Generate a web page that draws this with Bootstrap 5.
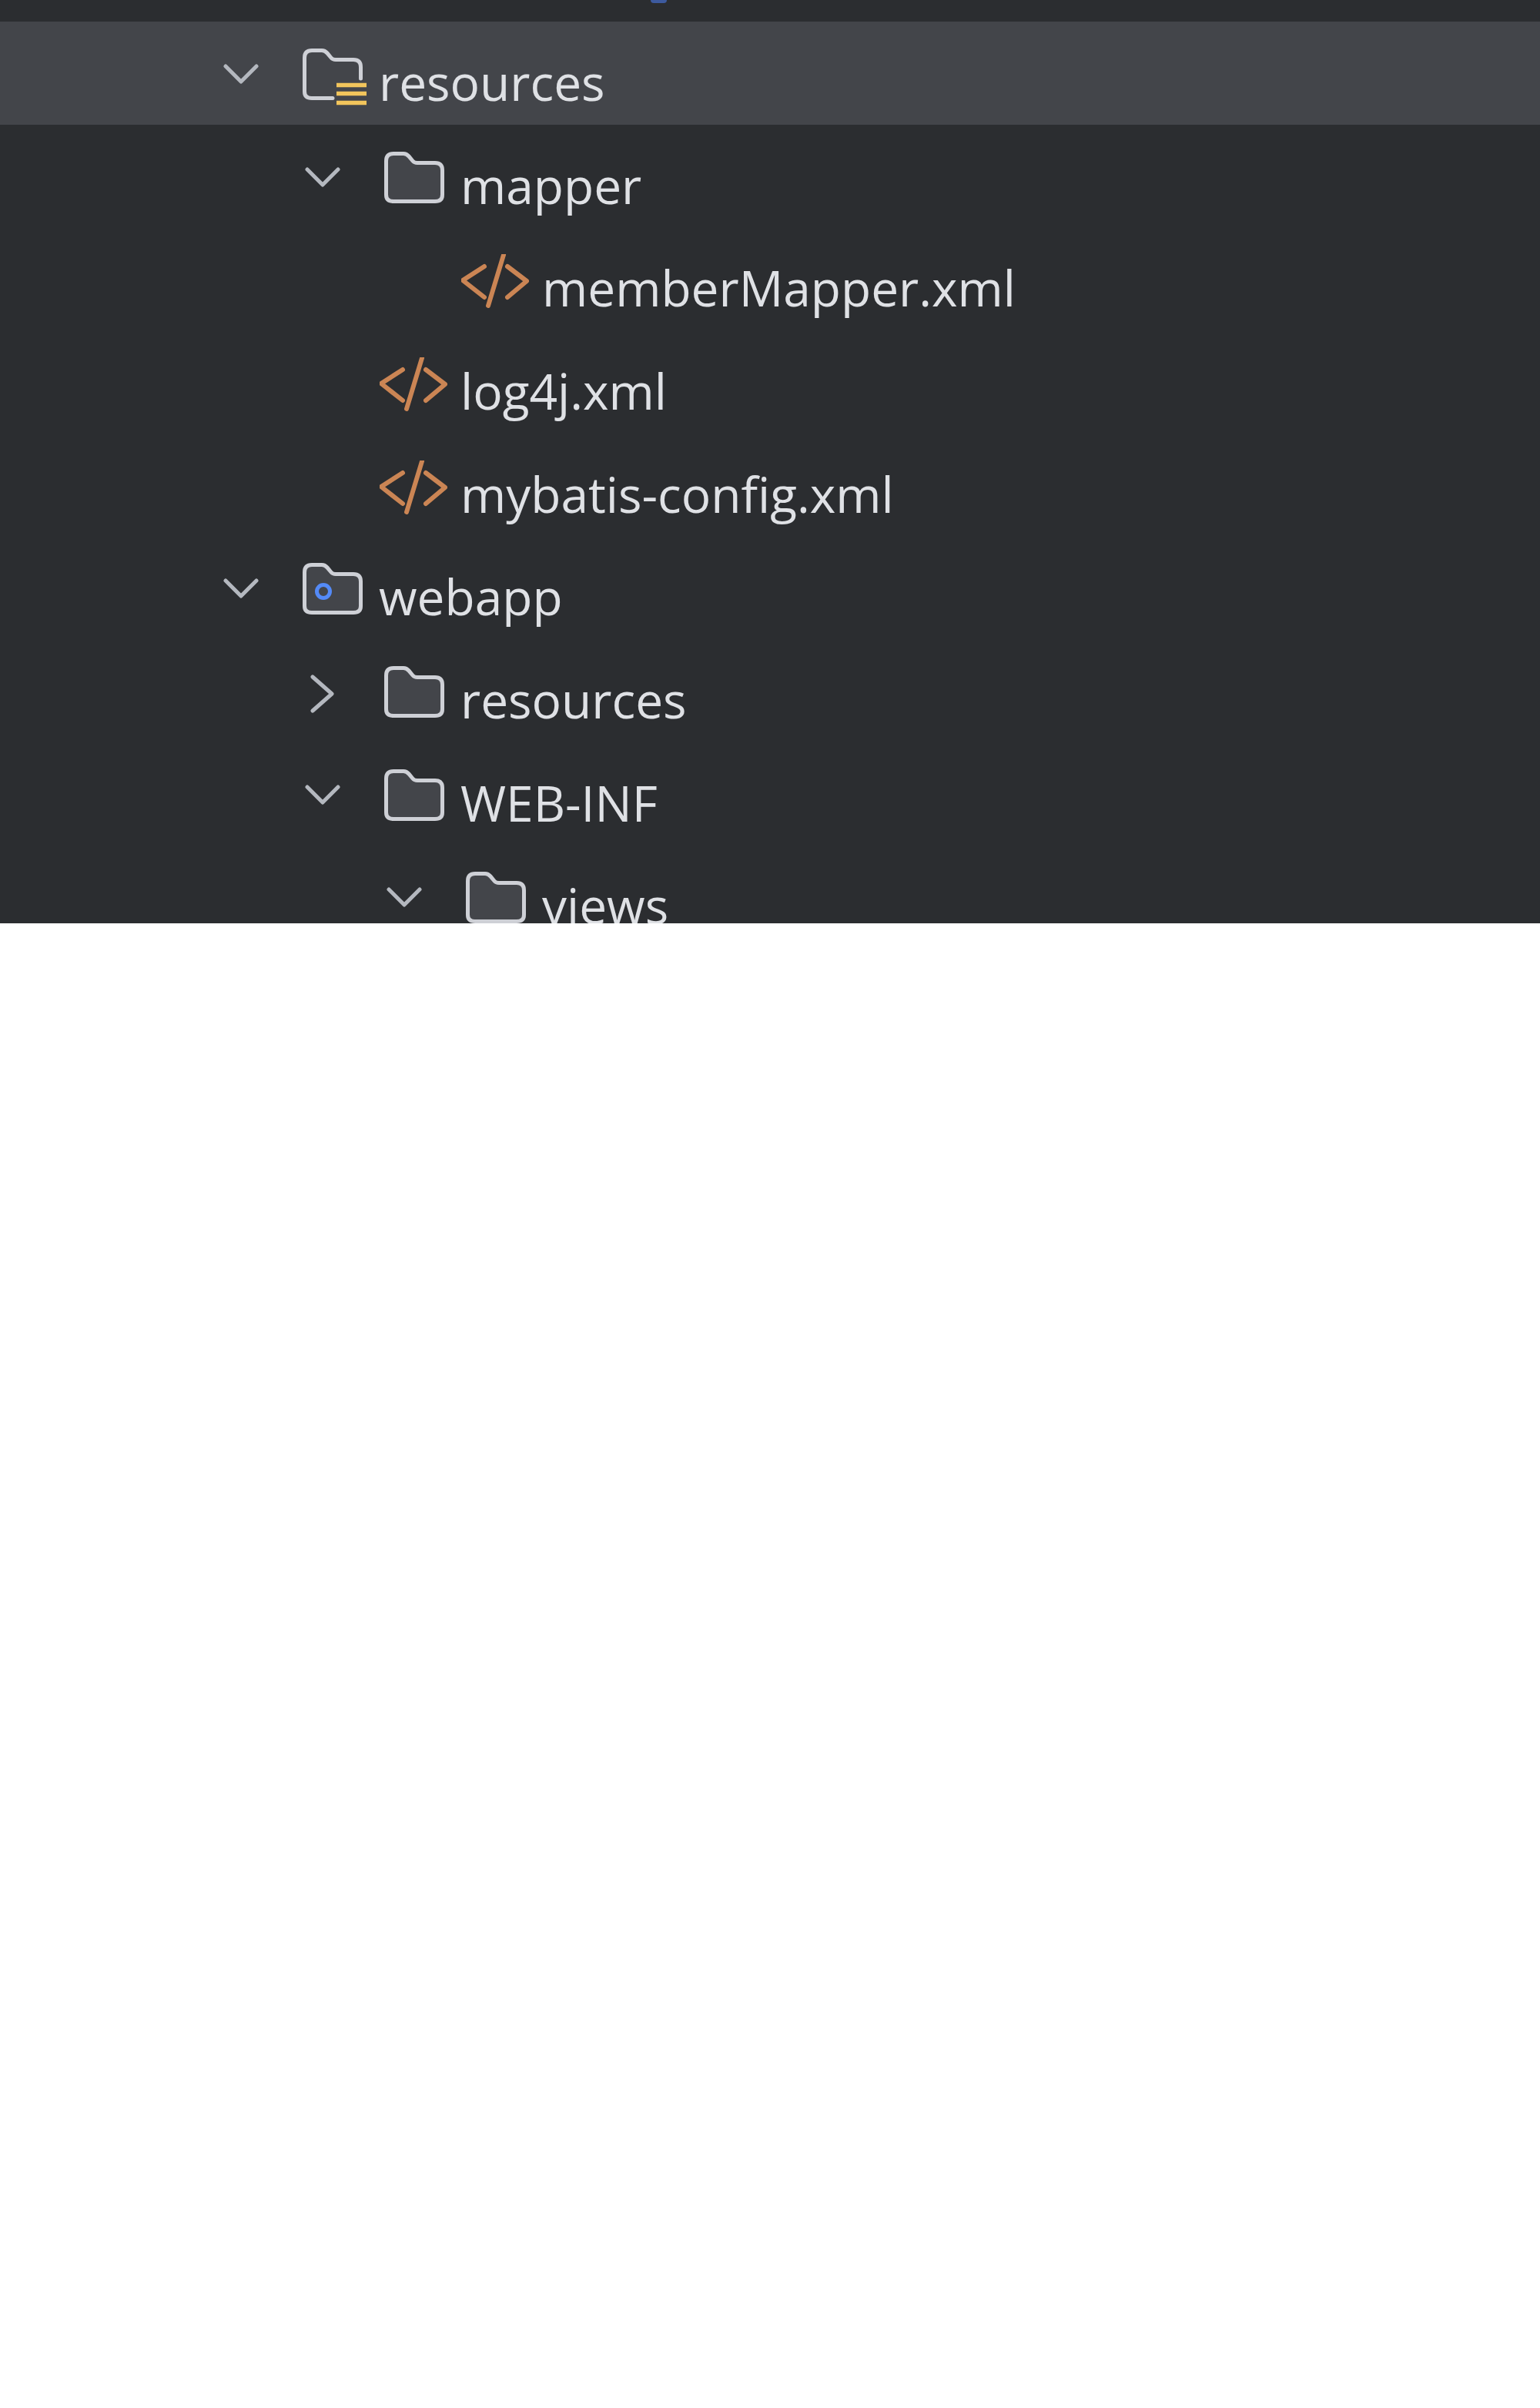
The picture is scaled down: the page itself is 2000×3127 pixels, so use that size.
<!DOCTYPE html>
<html lang="en">
<head>
  <meta charset="UTF-8">
  <title>Project tree</title>
  <link href="https://cdn.jsdelivr.net/npm/bootstrap@5.3.0/dist/css/bootstrap.min.css" rel="stylesheet">
  <style>
    body { background: #fff; }
    .tree-panel { height: 1199px; background: #2b2d30; font-family: "Open Sans", "Liberation Sans", sans-serif; font-size: 64px; color: #dfe1e5; }
    .tree-top { height: 28px; padding-left: 845px; }
    .tree-blip { display: block; width: 21px; height: 4px; background: #3d5a9e; border-radius: 0 0 10px 10px; }
    .tree-row { height: 133.7px; }
    .tree-row.is-selected { background: #43454a; }
    .depth-0 { padding-left: 290px; }
    .depth-1 { padding-left: 396px; }
    .depth-2 { padding-left: 502px; }
    .tree-arrow { width: 97px; height: 60px; flex-shrink: 0; filter: blur(.6px); }
    .tree-icon { width: 105px; height: 80px; flex-shrink: 0; margin-top: 16px; filter: blur(.6px); }
    .tree-label { line-height: 1; padding-top: 24px; white-space: nowrap; filter: blur(.6px); }
    .stroke-line { fill: none; stroke: #ced0d6; stroke-width: 5; stroke-linecap: round; stroke-linejoin: round; }
    .stroke-arrow { fill: none; stroke: #b4b8bf; stroke-width: 5; stroke-linecap: round; stroke-linejoin: round; }
    .stroke-xml { fill: none; stroke: #cb8554; stroke-width: 6; stroke-linecap: round; stroke-linejoin: round; }
    .fill-folder { fill: #43454a; }
  </style>
</head>
<body>
  <div class="tree-panel overflow-hidden">
    <div class="tree-top"><span class="tree-blip"></span></div>
    <ul class="list-unstyled mb-0" id="tree"></ul>
  </div>

  <script src="https://cdn.jsdelivr.net/npm/bootstrap@5.3.0/dist/js/bootstrap.bundle.min.js"></script>
  <script>
    const folderPath = 'M2.5 12Q2.5 2.5 12 2.5H25Q29 2.5 32 6L37 12Q39 14.5 43 14.5H66Q75.5 14.5 75.5 24V56Q75.5 64.5 66 64.5H12Q2.5 64.5 2.5 56Z';

    const icons = {
      folder: `<path class="fill-folder stroke-line" d="${folderPath}"/>`,
      web: `<path class="fill-folder stroke-line" d="${folderPath}"/>
            <circle cx="27" cy="37" r="8.5" fill="none" stroke="#548af7" stroke-width="5"/>`,
      res: `<path class="stroke-line" d="M39 64.5H12Q2.5 64.5 2.5 56V12Q2.5 2.5 12 2.5H25Q29 2.5 32 6L37 12Q39 14.5 43 14.5H66Q75.5 14.5 75.5 24V39"/>
            <path d="M44 47.5H83M44 58.5H83M44 70.5H83" stroke="#f2c55c" stroke-width="5.5" fill="none"/>`,
      xml: `<path class="stroke-xml" d="M24 16L-4 34L24 56M49 1L29 67M54 16L79 35L54 56"/>`
    };

    const arrows = {
      down: 'M3 21L23 41L43 21',
      right: 'M10 12L35 34L10 56'
    };

    const rows = [
      { depth: 0, arrow: 'down', icon: 'res', name: 'resources', selected: true },
      { depth: 1, arrow: 'down', icon: 'folder', name: 'mapper' },
      { depth: 2, icon: 'xml', name: 'memberMapper.xml' },
      { depth: 1, icon: 'xml', name: 'log4j.xml' },
      { depth: 1, icon: 'xml', name: 'mybatis-config.xml' },
      { depth: 0, arrow: 'down', icon: 'web', name: 'webapp' },
      { depth: 1, arrow: 'right', icon: 'folder', name: 'resources' },
      { depth: 1, arrow: 'down', icon: 'folder', name: 'WEB-INF' },
      { depth: 2, arrow: 'down', icon: 'folder', name: 'views' }
    ];

    const tree = document.getElementById('tree');
    rows.forEach(row => {
      const arrow = row.arrow ? `<path class="stroke-arrow" d="${arrows[row.arrow]}"/>` : '';
      tree.innerHTML += `
        <li class="tree-row d-flex align-items-center depth-${row.depth} ${row.selected ? 'is-selected' : ''}">
          <svg class="tree-arrow" viewBox="0 0 97 60">${arrow}</svg>
          <svg class="tree-icon" viewBox="-6 0 105 80">${icons[row.icon]}</svg>
          <span class="tree-label">${row.name}</span>
        </li>`;
    });
  </script>
</body>
</html>
